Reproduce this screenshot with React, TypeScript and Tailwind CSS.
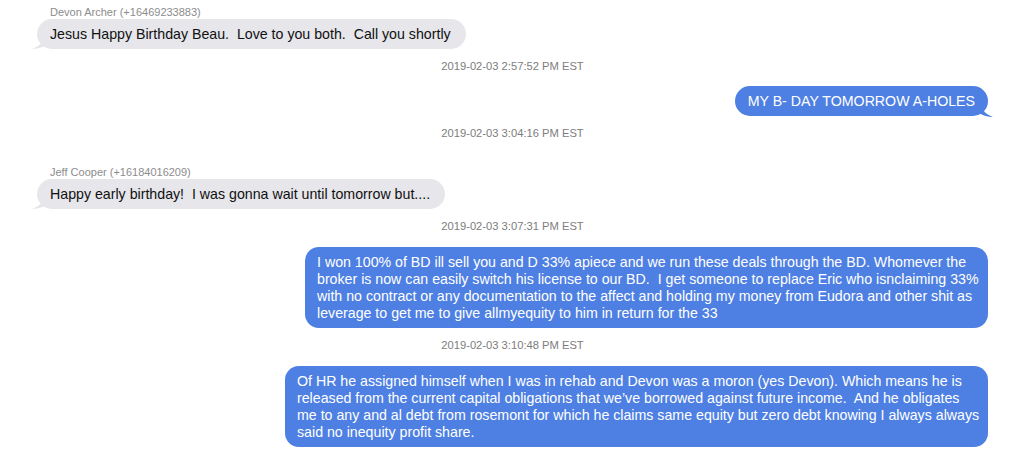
import React from "react";

const blue = "bg-[#4e7fe3]";

function Stamp({ children, className = "" }: { children: React.ReactNode; className?: string }) {
  return (
    <div className={`text-center text-[11.2px] leading-[13px] text-[#7d7d7d] ${className}`}>
      {children}
    </div>
  );
}

function Received({ name, text, className = "" }: { name: string; text: string; className?: string }) {
  return (
    <div className={className}>
      <div className="pl-[13px] text-[11px] leading-[13px] text-[#8c8c8c]">{name}</div>
      <div className="flex">
        <div className="relative flex h-[30px] items-center rounded-[15px] bg-[#e6e6eb] pl-[13px] pr-[15px] text-[14.2px] leading-[17px] text-[#111] whitespace-pre">
          {text}
          <svg className="absolute -left-[5px] bottom-0" width="14" height="13" viewBox="0 0 14 13">
            <path d="M11 0 C11 6 8 10 0 13 C5 13 10 11.5 14 9 Z" fill="#e6e6eb" />
          </svg>
        </div>
      </div>
    </div>
  );
}

function SentShort({ text, className = "" }: { text: string; className?: string }) {
  return (
    <div className={`flex justify-end ${className}`}>
      <div className={`relative flex h-[30px] items-center rounded-[15px] ${blue} px-[13px] text-[14.2px] leading-[17px] text-white whitespace-pre`}>
        {text}
        <svg className="absolute -right-[5px] bottom-[-1px]" width="14" height="13" viewBox="0 0 14 13">
          <path d="M3 0 C3 6 6 10 14 13 C9 13 4 11.5 0 9 Z" fill="#4e7fe3" />
        </svg>
      </div>
    </div>
  );
}

function SentLong({ lines, width, className = "" }: { lines: string[]; width: string; className?: string }) {
  return (
    <div className={`flex justify-end ${className}`}>
      <div className={`${width} rounded-[14px] ${blue} pl-[12px] pr-[10px] pt-[7px] pb-[6px] text-[14.2px] leading-[17px] text-white`}>
        {lines.map((l, i) => (
          <div key={i} className="whitespace-pre">
            {l}
          </div>
        ))}
      </div>
    </div>
  );
}

export default function App() {
  return (
    <div className="h-[470px] w-[1024px] overflow-hidden bg-white pl-[37px] pr-[36px] font-['Liberation_Sans',Arial,sans-serif]">
      <Received
        className="pt-[6px]"
        name="Devon Archer (+16469233883)"
        text="Jesus Happy Birthday Beau.  Love to you both.  Call you shortly"
      />
      <Stamp className="mt-[11px]">2019-02-03 2:57:52 PM EST</Stamp>
      <SentShort className="mt-[13px]" text="MY B- DAY TOMORROW A-HOLES" />
      <Stamp className="mt-[11px]">2019-02-03 3:04:16 PM EST</Stamp>
      <Received
        className="mt-[26px]"
        name="Jeff Cooper (+16184016209)"
        text="Happy early birthday!  I was gonna wait until tomorrow but...."
      />
      <Stamp className="mt-[11px]">2019-02-03 3:07:31 PM EST</Stamp>
      <SentLong
        className="mt-[14px]"
        width="w-[683px]"
        lines={[
          "I won 100% of BD ill sell you and D 33% apiece and we run these deals through the BD. Whomever the",
          "broker is now can easily switch his license to our BD.  I get someone to replace Eric who isnclaiming 33%",
          "with no contract or any documentation to the affect and holding my money from Eudora and other shit as",
          "leverage to get me to give allmyequity to him in return for the 33",
        ]}
      />
      <Stamp className="mt-[11px]">2019-02-03 3:10:48 PM EST</Stamp>
      <SentLong
        className="mt-[14px]"
        width="w-[703px]"
        lines={[
          "Of HR he assigned himself when I was in rehab and Devon was a moron (yes Devon). Which means he is",
          "released from the current capital obligations that we’ve borrowed against future income.  And he obligates",
          "me to any and al debt from rosemont for which he claims same equity but zero debt knowing I always always",
          "said no inequity profit share.",
        ]}
      />
    </div>
  );
}
